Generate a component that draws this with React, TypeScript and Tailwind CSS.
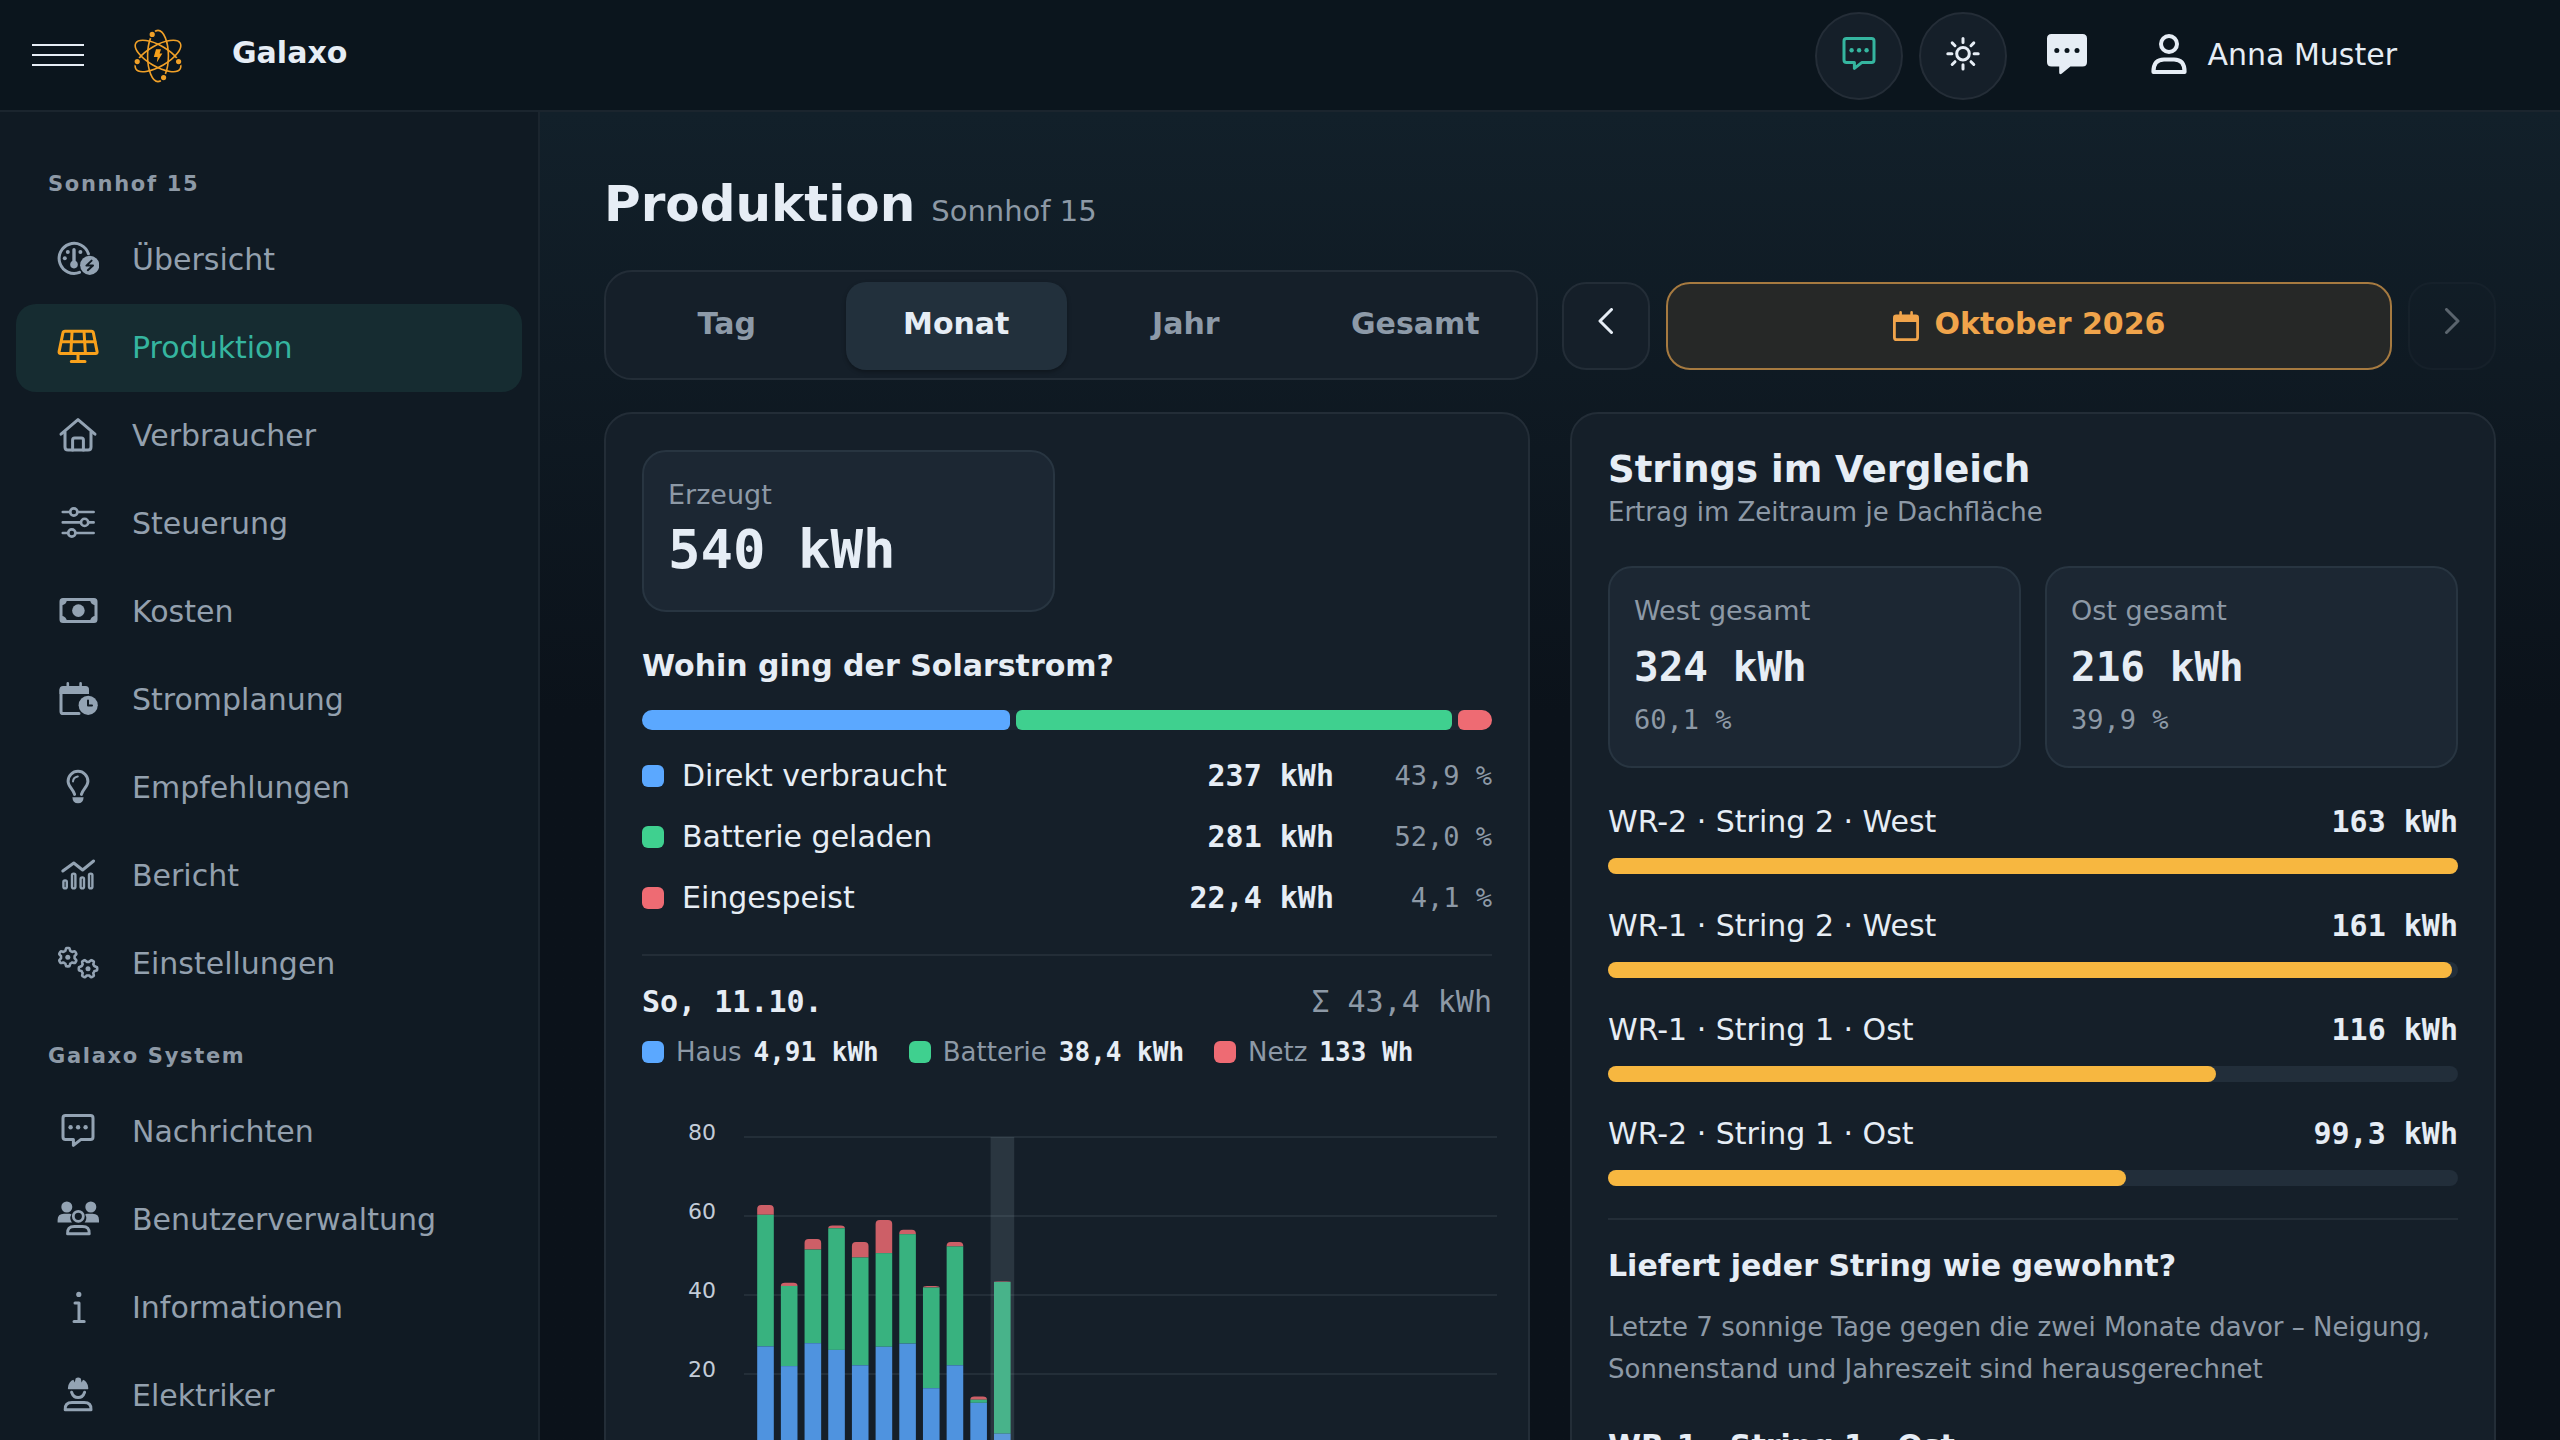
import React, { useState } from 'react';

interface IconProps {
  className?: string;
}

interface NavItem {
  label: string;
  icon: React.FC<IconProps>;
}

const NavSvg: React.FC<IconProps & { children: React.ReactNode }> = ({ className = 'size-[42px]', children }) => (
  <svg
    viewBox="0 0 42 42"
    className={`${className} shrink-0`}
    fill="none"
    stroke="currentColor"
    strokeWidth="3"
    strokeLinecap="round"
    strokeLinejoin="round"
    aria-hidden="true"
  >
    {children}
  </svg>
);

// Closed outline of a gear with soft teeth
const gearPath = (cx: number, cy: number, r: number, depth: number, teeth: number) => {
  const points: string[] = [];
  for (let i = 0; i < 72; i++) {
    const a = (i / 72) * Math.PI * 2;
    const wave = Math.max(-1, Math.min(1, Math.cos(a * teeth) * 1.8));
    const rad = r + wave * depth;
    points.push(`${(cx + Math.sin(a) * rad).toFixed(2)} ${(cy - Math.cos(a) * rad).toFixed(2)}`);
  }
  return `M${points.join('L')}Z`;
};

const GaugeIcon: React.FC<IconProps> = (props) => (
  <NavSvg {...props}>
    <path d="M31.4 15.8A15 15 0 1 0 22.5 34.4" />
    <path d="M17 11.8V26" strokeWidth="3.4" />
    <g fill="currentColor" stroke="none">
      <circle cx="17" cy="26.6" r="3.8" />
      <circle cx="7.8" cy="20.3" r="2" />
      <circle cx="10.8" cy="14" r="2" />
      <circle cx="23.4" cy="14" r="2" />
      <circle cx="32.7" cy="27.3" r="9.6" />
    </g>
    <path d="M34.6 22.6L29.4 27.6H36L30.8 32.2" stroke="#101a23" strokeWidth="2" />
  </NavSvg>
);

const SolarIcon: React.FC<IconProps> = (props) => (
  <NavSvg {...props}>
    <path d="M8 5.3H34.4Q36 5.3 36.4 7L40.1 25.6Q40.4 27.5 38.6 27.5H3.6Q1.8 27.5 2.1 25.6L5.9 7Q6.3 5.3 8 5.3Z" />
    <path d="M4.4 15.7H38M15.1 5.5L13.8 27M27 5.5L28.4 27M21 28V35.5M14.3 35.6H28" />
  </NavSvg>
);

const HouseIcon: React.FC<IconProps> = (props) => (
  <NavSvg {...props}>
    <path d="M4 20.2L21 5.6L38 20.2" />
    <path d="M8 18V33Q8 36 11 36H31Q34 36 34 33V18" />
    <path d="M15.6 36V26Q15.6 24 17.6 24H24.4Q26.4 24 26.4 26V36" />
  </NavSvg>
);

const SlidersIcon: React.FC<IconProps> = (props) => (
  <NavSvg {...props}>
    <path d="M5.8 10H13M20.6 10H36.6M5.8 20.4H23.8M31.4 20.4H36.6M5.8 31H11M18.6 31H36.6" strokeWidth="2.7" />
    <g strokeWidth="2.6">
      <circle cx="16.8" cy="10" r="3.6" />
      <circle cx="27.6" cy="20.4" r="3.6" />
      <circle cx="14.8" cy="31" r="3.6" />
    </g>
  </NavSvg>
);

const BanknoteIcon: React.FC<IconProps> = (props) => (
  <NavSvg {...props}>
    <rect x="4" y="9.6" width="35" height="22" rx="2" />
    <g fill="currentColor" stroke="none">
      <circle cx="21.4" cy="20.6" r="6.3" />
      <path d="M4 9.6H10Q9.6 15 4 15.4ZM39 9.6H33Q33.4 15 39 15.4ZM4 31.6H10Q9.6 26.2 4 25.8ZM39 31.6H33Q33.4 26.2 39 25.8Z" />
    </g>
  </NavSvg>
);

const CalendarClockIcon: React.FC<IconProps> = (props) => (
  <NavSvg {...props}>
    <path d="M4 12V33.4Q4 35.6 6.2 35.6H22" />
    <path d="M10.8 5.4V10M23.6 5.4V10" strokeWidth="2.6" />
    <g fill="currentColor" stroke="none">
      <path d="M6 8H28.5Q32 8 32 11.5V16H2.5V11.5Q2.5 8 6 8Z" />
      <circle cx="31.2" cy="27.3" r="9.6" />
    </g>
    <path d="M31 22.6V27.6H35" stroke="#101a23" strokeWidth="2" />
  </NavSvg>
);

const BulbIcon: React.FC<IconProps> = (props) => (
  <NavSvg {...props}>
    <path d="M17.6 28.4C16.4 23.4 11.1 20.6 11.1 15.2A9.9 9.9 0 0 1 30.9 15.2C30.9 20.6 25.6 23.4 24.4 28.4" />
    <path d="M16 15.4Q16.4 11 20.8 10.4" strokeWidth="2" />
    <path d="M15.4 31.2H26.6Q26.4 37.2 21 37.2Q15.6 37.2 15.4 31.2Z" fill="currentColor" stroke="none" />
  </NavSvg>
);

const ReportIcon: React.FC<IconProps> = (props) => (
  <NavSvg {...props}>
    <path d="M5.8 17L16.8 9L25.6 16L36.6 7" />
    <g strokeWidth="2.4">
      <rect x="6.4" y="26.4" width="3.4" height="8" rx="1.6" />
      <rect x="15" y="19.6" width="3.4" height="14.8" rx="1.6" />
      <rect x="23.6" y="23.4" width="3.4" height="11" rx="1.6" />
      <rect x="32" y="19.6" width="3.4" height="14.8" rx="1.6" />
    </g>
  </NavSvg>
);

const GearsIcon: React.FC<IconProps> = (props) => (
  <NavSvg {...props}>
    <g strokeWidth="2.6">
      <path d={gearPath(10.8, 15.2, 8, 1.2, 6)} />
      <path d={gearPath(31, 26.7, 8, -1.2, 6)} />
    </g>
    <g fill="currentColor" stroke="none">
      <circle cx="10.8" cy="15.2" r="2.5" />
      <circle cx="31" cy="26.7" r="2.5" />
    </g>
  </NavSvg>
);

const MessageIcon: React.FC<IconProps> = (props) => (
  <NavSvg {...props}>
    <path d="M8.5 5.5H33.5Q36 5.5 36 8V27Q36 29.4 33.5 29.4H24L16.4 35.4V29.4H8.5Q6 29.4 6 27V8Q6 5.5 8.5 5.5Z" />
    <g fill="currentColor" stroke="none">
      <circle cx="13.6" cy="17.2" r="2.2" />
      <circle cx="21.1" cy="17.2" r="2.2" />
      <circle cx="28.6" cy="17.2" r="2.2" />
    </g>
  </NavSvg>
);

const MessageSolidIcon: React.FC<IconProps> = ({ className }) => (
  <svg viewBox="0 0 40 40" className={className} aria-hidden="true">
    <path
      d="M4.5 0H35.5Q40 0 40 4.5V28Q40 32.5 35.5 32.5H23.4L14.6 39.8Q12.2 41 12.2 38.4V32.5H4.5Q0 32.5 0 28V4.5Q0 0 4.5 0Z"
      fill="currentColor"
    />
    <g fill="#0b151d">
      <circle cx="9.8" cy="16.6" r="2.5" />
      <circle cx="20" cy="16.6" r="2.5" />
      <circle cx="30" cy="16.6" r="2.5" />
    </g>
  </svg>
);

const UsersIcon: React.FC<IconProps> = (props) => (
  <NavSvg {...props}>
    <g fill="currentColor" stroke="none">
      <circle cx="9.8" cy="9" r="5.5" />
      <circle cx="33.8" cy="9" r="5.5" />
      <path d="M.6 24.4V22Q.6 15.8 7 15.8H12.6Q13.8 15.8 14.4 16.4Q12 20.4 15 24.4Z" />
      <path d="M42 24.4V22Q42 15.8 35.6 15.8H30Q28.8 15.8 28.2 16.4Q30.6 20.4 27.6 24.4Z" />
    </g>
    <circle cx="21.3" cy="18.3" r="5" strokeWidth="2.8" />
    <path d="M10.6 35.8Q10 28.4 17.4 28.4H25.4Q32.8 28.4 32.2 35.8Z" strokeWidth="3" />
  </NavSvg>
);

const InfoIcon: React.FC<IconProps> = (props) => (
  <NavSvg {...props}>
    <circle cx="21.8" cy="8.4" r="2.6" fill="currentColor" stroke="none" />
    <path d="M18 17H22V35.4M17 35.6H27.2" />
  </NavSvg>
);

const ElectricianIcon: React.FC<IconProps> = (props) => (
  <NavSvg {...props}>
    <path
      d="M11.4 15.2Q10.6 15 11 13.4Q11.8 7.4 16.4 5.8L17.8 8.6L18.6 4.4Q21.2 2.4 23.8 4.4L24.6 8.6L26 5.8Q30.4 7.4 31.2 13.4Q31.6 15 30.8 15.2Z"
      fill="currentColor"
      stroke="none"
    />
    <path d="M14.6 18.2Q16.4 23.6 21.1 23.6Q25.8 23.6 27.6 18.2" />
    <path d="M8.2 35.8Q7.6 28.6 15 28.6H27.2Q34.6 28.6 34 35.8Z" />
  </NavSvg>
);

const SunIcon: React.FC<IconProps> = (props) => (
  <NavSvg {...props}>
    <circle cx="21" cy="20.7" r="6.3" />
    <path d="M21 5.5V9.6M21 31.8V35.9M5.8 20.7H9.9M32.1 20.7H36.2M10.2 9.9L13 12.7M29 28.7L31.8 31.5M10.2 31.5L13 28.7M29 12.7L31.8 9.9" />
  </NavSvg>
);

const UserIcon: React.FC<IconProps> = ({ className }) => (
  <svg viewBox="0 0 36 40" className={className} fill="none" stroke="currentColor" strokeWidth="4" strokeLinejoin="round" aria-hidden="true">
    <circle cx="18" cy="10" r="8" />
    <path d="M2.4 38Q2.4 25.6 13 25.6H23Q33.6 25.6 33.6 38Z" />
  </svg>
);

const CalendarIcon: React.FC<IconProps> = ({ className }) => (
  <svg viewBox="0 0 26 30" className={className} fill="none" stroke="currentColor" aria-hidden="true">
    <path d="M1.4 9V26.4Q1.4 28.6 3.6 28.6H22.4Q24.6 28.6 24.6 26.4V9" strokeWidth="2.8" />
    <path d="M7.6 1.4V5M18.6 1.4V5" strokeWidth="2.6" strokeLinecap="round" />
    <path d="M3.2 3.6H22.8Q26 3.6 26 6.8V11H0V6.8Q0 3.6 3.2 3.6Z" fill="currentColor" stroke="none" />
  </svg>
);

const ChevronIcon: React.FC<IconProps & { d: string }> = ({ className, d }) => (
  <svg viewBox="0 0 16 26" className={className} fill="none" stroke="currentColor" strokeWidth="3" strokeLinecap="round" strokeLinejoin="round" aria-hidden="true">
    <path d={d} />
  </svg>
);

const AtomLogo: React.FC<IconProps> = ({ className }) => (
  <svg viewBox="0 0 48 54" className={className} fill="none" stroke="#f0a028" strokeWidth="1.6" aria-hidden="true">
    <ellipse cx="24" cy="27" rx="10.4" ry="25.6" />
    <ellipse cx="24" cy="27" rx="10.4" ry="25.6" transform="rotate(60 24 27)" />
    <ellipse cx="24" cy="27" rx="10.4" ry="25.6" transform="rotate(120 24 27)" />
    {/* Electrons, each with a small gap in its orbit */}
    <g fill="#f0a028" stroke="#0b151d" strokeWidth="1.6">
      <circle cx="18.2" cy="5.4" r="3.4" />
      <circle cx="3.2" cy="32.6" r="3.4" />
      <circle cx="44.6" cy="32.6" r="3.4" />
      <circle cx="29.6" cy="48.6" r="3.4" />
    </g>
    <path d="M22 20.2H27L25.6 24.6H28.4L22.8 33.4L23.6 28H19.8Z" fill="#f7a01a" stroke="none" />
  </svg>
);

const siteItems: NavItem[] = [
  { label: 'Übersicht', icon: GaugeIcon },
  { label: 'Produktion', icon: SolarIcon },
  { label: 'Verbraucher', icon: HouseIcon },
  { label: 'Steuerung', icon: SlidersIcon },
  { label: 'Kosten', icon: BanknoteIcon },
  { label: 'Stromplanung', icon: CalendarClockIcon },
  { label: 'Empfehlungen', icon: BulbIcon },
  { label: 'Bericht', icon: ReportIcon },
  { label: 'Einstellungen', icon: GearsIcon },
];

const systemItems: NavItem[] = [
  { label: 'Nachrichten', icon: MessageIcon },
  { label: 'Benutzerverwaltung', icon: UsersIcon },
  { label: 'Informationen', icon: InfoIcon },
  { label: 'Elektriker', icon: ElectricianIcon },
];

const ranges = ['Tag', 'Monat', 'Jahr', 'Gesamt'];

const usage = [
  { label: 'Direkt verbraucht', value: '237 kWh', share: '43,9 %', weight: 43.9, color: 'bg-[#5ba8ff]' },
  { label: 'Batterie geladen', value: '281 kWh', share: '52,0 %', weight: 52, color: 'bg-[#3fd08f]' },
  { label: 'Eingespeist', value: '22,4 kWh', share: '4,1 %', weight: 4.1, color: 'bg-[#ee6b73]' },
];

const dayLegend = [
  { label: 'Haus', value: '4,91 kWh', color: 'bg-[#5ba8ff]' },
  { label: 'Batterie', value: '38,4 kWh', color: 'bg-[#3fd08f]' },
  { label: 'Netz', value: '133 Wh', color: 'bg-[#ee6b73]' },
];

const sides = [
  { label: 'West gesamt', value: '324 kWh', share: '60,1 %' },
  { label: 'Ost gesamt', value: '216 kWh', share: '39,9 %' },
];

const strings = [
  { label: 'WR-2 · String 2 · West', value: '163 kWh', percent: 100 },
  { label: 'WR-1 · String 2 · West', value: '161 kWh', percent: 99.3 },
  { label: 'WR-1 · String 1 · Ost', value: '116 kWh', percent: 71.5 },
  { label: 'WR-2 · String 1 · Ost', value: '99,3 kWh', percent: 60.9 },
];

// kWh per day: house, battery, grid
const days = [
  [27, 33.3, 2.5],
  [22, 20.3, 0.8],
  [27.8, 23.7, 2.7],
  [26.1, 30.8, 0.7],
  [22.2, 27.3, 3.9],
  [26.9, 23.7, 8.4],
  [27.7, 27.7, 1.1],
  [16.4, 25.5, 0.4],
  [22.2, 30.1, 1.1],
  [12.7, 0.8, 0.8],
  [4.9, 38.4, 0.1],
];

const selectedDay = 10;

const DayChart: React.FC = () => {
  const zero = 363;
  const scale = 3.95;
  const step = 23.68;
  return (
    <svg viewBox="0 0 850 410" className="block w-full mt-5 overflow-visible" role="img" aria-label="Ertrag pro Tag">
      {[80, 60, 40, 20, 0].map((tick) => (
        <g key={tick}>
          <line x1="102" x2="855" y1={zero - tick * scale} y2={zero - tick * scale} stroke="#232e38" strokeWidth="2" />
          <text x="74" y={zero - tick * scale + 3} textAnchor="end" fontSize="22" fill="#c3ccd8">
            {tick}
          </text>
        </g>
      ))}
      {days.map(([house, battery, grid], i) => {
        const x = 115.2 + i * step;
        const total = house + battery + grid;
        const corner = Math.min(4, grid * scale);
        const gridBase = zero - (house + battery) * scale;
        return (
          <g key={i}>
            <path
              d={`M${x} ${gridBase}V${zero - total * scale + corner}q0 -${corner} 4 -${corner}h8.6q4 0 4 ${corner}V${gridBase}Z`}
              fill="#cd5f67"
            />
            <rect x={x} y={gridBase} width="16.6" height={battery * scale} fill="#38b27f" />
            <rect x={x} y={zero - house * scale} width="16.6" height={house * scale} fill="#4f93df" />
          </g>
        );
      })}
      <rect x={111.8 + selectedDay * step} y={zero - 80 * scale} width="23.6" height={80 * scale} fill="#a8bac8" fillOpacity="0.15" />
    </svg>
  );
};

const NavList: React.FC<{ title: string; items: NavItem[]; active: string; onSelect: (label: string) => void }> = ({
  title,
  items,
  active,
  onSelect,
}) => (
  <div>
    <h2 className="h-20 pt-8 pl-8 text-[21px] leading-8 font-bold tracking-[0.08em] text-[#8d99a6]">{title}</h2>
    <ul>
      {items.map(({ label, icon: Icon }) => (
        <li key={label}>
          <a
            href="#"
            onClick={() => onSelect(label)}
            className={`flex items-center gap-[33px] h-[88px] pl-[41px] pb-0.5 rounded-[20px] text-[30px] ${
              label === active ? 'bg-[#162c31] text-[#35b59f]' : 'text-[#93a0ae]'
            }`}
          >
            <span className={label === active ? 'text-[#f9a11b]' : 'text-[#93a3b3]'}>
              <Icon />
            </span>
            {label}
          </a>
        </li>
      ))}
    </ul>
  </div>
);

const App: React.FC = () => {
  const [page, setPage] = useState('Produktion');
  const [range, setRange] = useState('Monat');

  return (
    <div className="h-screen flex flex-col overflow-hidden bg-[#0b121a] text-[#e6edf5] font-['DejaVu_Sans',sans-serif]">
      <header className="flex items-center shrink-0 h-28 pt-0.5 pl-8 pr-[163px] bg-[#0b151d] border-b-2 border-[#1b252e]">
        <button type="button" aria-label="Menü" className="flex flex-col gap-2 w-[52px] pb-0.5">
          <span className="h-0.5 bg-[#e6edf5]" />
          <span className="h-0.5 bg-[#e6edf5]" />
          <span className="h-0.5 bg-[#e6edf5]" />
        </button>
        <AtomLogo className="w-12 h-[54px] ml-[50px]" />
        <span className="ml-[50px] pb-2 text-[30px] font-bold">Galaxo</span>
        <div className="flex items-center ml-auto">
          <button type="button" aria-label="Chat" className="size-[88px] flex items-center justify-center pb-1 rounded-full bg-[#151f29] border-2 border-[#242d37] text-[#35b59f]">
            <MessageIcon />
          </button>
          <button type="button" aria-label="Helles Design" className="size-[88px] ml-4 flex items-center justify-center pb-1 rounded-full bg-[#151f29] border-2 border-[#242d37]">
            <SunIcon />
          </button>
          <button type="button" aria-label="Nachrichten" className="ml-10 pb-1">
            <MessageSolidIcon className="size-10 overflow-visible" />
          </button>
          <button type="button" className="flex items-center gap-5 ml-16 pb-1 text-[30px]">
            <UserIcon className="w-9 h-10" />
            Anna Muster
          </button>
        </div>
      </header>

      <div className="flex flex-1 min-h-0">
        <nav className="w-[540px] shrink-0 pt-6 px-4 overflow-y-auto [scrollbar-width:none] bg-[#101a23] border-r-2 border-[#1b252e]">
          <NavList title="Sonnhof 15" items={siteItems} active={page} onSelect={setPage} />
          <NavList title="Galaxo System" items={systemItems} active={page} onSelect={setPage} />
        </nav>

        <main className="flex-1 min-w-0 px-16 pt-[60px] pb-16 overflow-y-auto [scrollbar-width:none] bg-linear-to-b from-[#12202a] to-[#0b121a] to-[600px]">
          <div className="flex items-baseline gap-4">
            <h1 className="text-[50px] leading-[64px] font-bold">Produktion</h1>
            <span className="text-[29px] text-[#8d99a6]">Sonnhof 15</span>
          </div>

          <div className="grid grid-cols-2 gap-6 mt-[34px]">
            <div className="grid grid-cols-4 gap-2 h-[110px] px-2.5 pt-2.5 pb-2 rounded-[28px] bg-[#151f29] border-2 border-[#232d37]">
              {ranges.map((name) => (
                <button
                  key={name}
                  type="button"
                  onClick={() => setRange(name)}
                  className={`pb-1.5 rounded-[20px] text-[30px] font-bold ${
                    name === range ? 'bg-[#22303c] shadow-[0_2px_4px_rgba(0,0,0,0.3)]' : 'text-[#8d9aa8]'
                  }`}
                >
                  {name}
                </button>
              ))}
            </div>
            <div className="flex items-center gap-4 pt-0.5">
              <button type="button" aria-label="Zurück" className="size-[88px] shrink-0 flex items-center justify-center pb-2.5 rounded-3xl bg-[#151f29] border-2 border-[#232d37]">
                <ChevronIcon className="w-4 h-[26px]" d="M13.5 1.5L2 13L13.5 24.5" />
              </button>
              <button type="button" className="flex-1 h-[88px] flex items-center justify-center gap-4 rounded-3xl bg-[#262827] border-2 border-[#a67a40] text-[30px] font-bold text-[#f0a44b]">
                <CalendarIcon className="w-[26px] h-[30px]" />
                <span className="pb-1.5">Oktober 2026</span>
              </button>
              <button type="button" aria-label="Weiter" disabled className="size-[88px] shrink-0 flex items-center justify-center pb-2.5 rounded-3xl bg-[#151f29] border-2 border-[#232d37] opacity-35">
                <ChevronIcon className="w-4 h-[26px]" d="M2.5 1.5L14 13L2.5 24.5" />
              </button>
            </div>
          </div>

          <div className="grid grid-cols-2 gap-10 mt-8">
            <section className="p-9 rounded-[28px] bg-[#151f29] border-2 border-[#232d37]">
              <div className="grid grid-cols-2 gap-6">
                <div className="px-6 pt-[25px] pb-7 rounded-3xl bg-[#1c2733] border-2 border-[#283541]">
                  <div className="text-[27px] leading-9 text-[#8d99a6]">Erzeugt</div>
                  <div className="mt-[5px] font-['DejaVu_Sans_Mono',monospace] text-[54px] leading-[64px] font-bold">540 kWh</div>
                </div>
              </div>

              <h3 className="mt-[34px] text-[30px] leading-10 font-bold">Wohin ging der Solarstrom?</h3>
              <div className="flex gap-1.5 h-5 mt-6 rounded-full overflow-hidden bg-[#1c2733]">
                {usage.map((item) => (
                  <div key={item.label} className={`rounded-md basis-0 ${item.color}`} style={{ flexGrow: item.weight }} />
                ))}
              </div>

              <ul className="flex flex-col gap-[21px] mt-[26px]">
                {usage.map((item) => (
                  <li key={item.label} className="flex items-center text-[30px] leading-10">
                    <span className={`size-[22px] mr-[18px] rounded-md ${item.color}`} />
                    <span className="flex-1">{item.label}</span>
                    <span className="font-['DejaVu_Sans_Mono',monospace] font-bold">{item.value}</span>
                    <span className="w-[158px] text-right font-['DejaVu_Sans_Mono',monospace] text-[27px] text-[#8d99a6]">{item.share}</span>
                  </li>
                ))}
              </ul>

              <hr className="mt-9 border-t-2 border-[#232d37]" />

              <div className="flex justify-between mt-[26px] font-['DejaVu_Sans_Mono',monospace] text-[30px] leading-10">
                <span className="font-bold">So, 11.10.</span>
                <span className="text-[#8d99a6]">Σ 43,4 kWh</span>
              </div>
              <ul className="flex gap-[30px] mt-3 text-[26px] leading-9">
                {dayLegend.map((item) => (
                  <li key={item.label} className="flex items-center">
                    <span className={`size-[22px] mr-3 rounded-md ${item.color}`} />
                    <span className="mr-3 text-[#8d99a6]">{item.label}</span>
                    <span className="font-['DejaVu_Sans_Mono',monospace] font-bold">{item.value}</span>
                  </li>
                ))}
              </ul>
              <DayChart />
            </section>

            <section className="p-9 rounded-[28px] bg-[#151f29] border-2 border-[#232d37]">
              <h2 className="text-[37px] leading-10 font-bold">Strings im Vergleich</h2>
              <p className="mt-1 text-[26px] leading-9 text-[#8d99a6]">Ertrag im Zeitraum je Dachfläche</p>

              <div className="grid grid-cols-2 gap-6 mt-9">
                {sides.map((side) => (
                  <div key={side.label} className="px-6 pt-[25px] pb-7 rounded-3xl bg-[#1c2733] border-2 border-[#283541]">
                    <div className="text-[27px] leading-9 text-[#8d99a6]">{side.label}</div>
                    <div className="mt-2.5 font-['DejaVu_Sans_Mono',monospace] text-[41px] leading-[56px] font-bold">{side.value}</div>
                    <div className="mt-[7px] font-['DejaVu_Sans_Mono',monospace] text-[27px] leading-9 text-[#8d99a6]">{side.share}</div>
                  </div>
                ))}
              </div>

              <ul className="flex flex-col gap-8 mt-[34px]">
                {strings.map((item) => (
                  <li key={item.label}>
                    <div className="flex justify-between text-[30px] leading-10">
                      <span>{item.label}</span>
                      <span className="font-['DejaVu_Sans_Mono',monospace] font-bold">{item.value}</span>
                    </div>
                    <div className="h-4 mt-4 rounded-full bg-[#222e3a]">
                      <div className="h-full rounded-full bg-[#f7b740]" style={{ width: `${item.percent}%` }} />
                    </div>
                  </li>
                ))}
              </ul>

              <hr className="mt-8 border-t-2 border-[#232d37]" />

              <h3 className="mt-[26px] text-[30px] leading-10 font-bold">Liefert jeder String wie gewohnt?</h3>
              <p className="mt-5 text-[26px] leading-[42px] text-[#8d99a6]">
                Letzte 7 sonnige Tage gegen die zwei Monate davor – Neigung, Sonnenstand und Jahreszeit sind herausgerechnet
              </p>
              <h4 className="mt-9 text-[30px] leading-10 font-bold">WR-1 · String 1 · Ost</h4>
            </section>
          </div>
        </main>
      </div>
    </div>
  );
};

export default App;
